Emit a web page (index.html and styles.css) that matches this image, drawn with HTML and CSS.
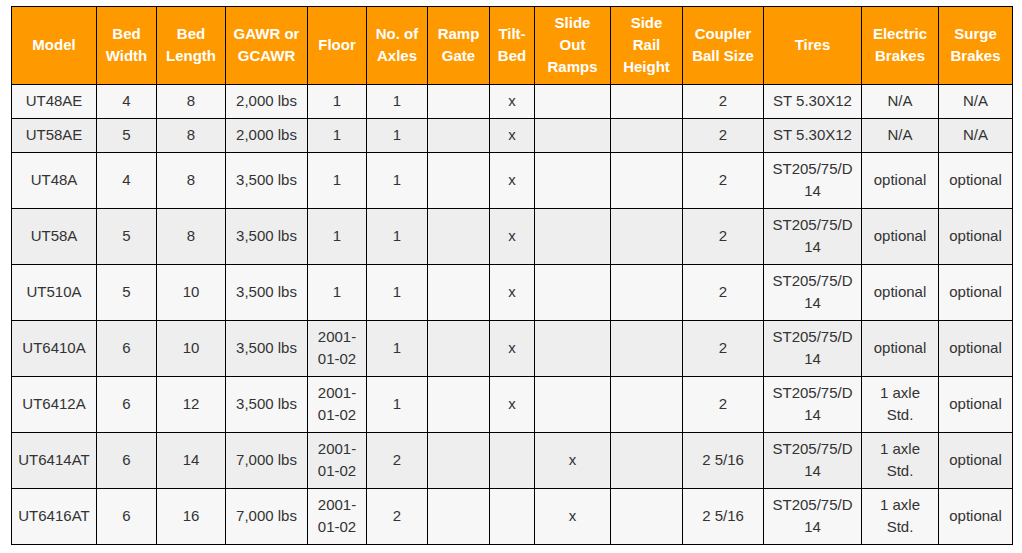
FILE: index.html
```html
<!DOCTYPE html>
<html>
<head>
<meta charset="utf-8">
<link rel="stylesheet" href="styles.css">
</head>
<body>
<div class="wrap">
<table class="spec">
<colgroup>
<col style="width:85px"><col style="width:60px"><col style="width:69px"><col style="width:82px"><col style="width:59px"><col style="width:61px"><col style="width:62px"><col style="width:45px"><col style="width:76px"><col style="width:72px"><col style="width:81px"><col style="width:98px"><col style="width:77px"><col style="width:74px">
</colgroup>
<thead>
<tr><th>Model</th><th>Bed Width</th><th>Bed Length</th><th>GAWR or GCAWR</th><th>Floor</th><th>No. of Axles</th><th>Ramp Gate</th><th>Tilt-Bed</th><th>Slide Out Ramps</th><th>Side Rail Height</th><th>Coupler Ball Size</th><th>Tires</th><th>Electric Brakes</th><th>Surge Brakes</th></tr>
</thead>
<tbody>
<tr><td>UT48AE</td><td>4</td><td>8</td><td>2,000 lbs</td><td>1</td><td>1</td><td></td><td>x</td><td></td><td></td><td>2</td><td>ST 5.30X12</td><td>N/A</td><td>N/A</td></tr>
<tr><td>UT58AE</td><td>5</td><td>8</td><td>2,000 lbs</td><td>1</td><td>1</td><td></td><td>x</td><td></td><td></td><td>2</td><td>ST 5.30X12</td><td>N/A</td><td>N/A</td></tr>
<tr><td>UT48A</td><td>4</td><td>8</td><td>3,500 lbs</td><td>1</td><td>1</td><td></td><td>x</td><td></td><td></td><td>2</td><td>ST205/75/D 14</td><td>optional</td><td>optional</td></tr>
<tr><td>UT58A</td><td>5</td><td>8</td><td>3,500 lbs</td><td>1</td><td>1</td><td></td><td>x</td><td></td><td></td><td>2</td><td>ST205/75/D 14</td><td>optional</td><td>optional</td></tr>
<tr><td>UT510A</td><td>5</td><td>10</td><td>3,500 lbs</td><td>1</td><td>1</td><td></td><td>x</td><td></td><td></td><td>2</td><td>ST205/75/D 14</td><td>optional</td><td>optional</td></tr>
<tr><td>UT6410A</td><td>6</td><td>10</td><td>3,500 lbs</td><td>2001-01-02</td><td>1</td><td></td><td>x</td><td></td><td></td><td>2</td><td>ST205/75/D 14</td><td>optional</td><td>optional</td></tr>
<tr><td>UT6412A</td><td>6</td><td>12</td><td>3,500 lbs</td><td>2001-01-02</td><td>1</td><td></td><td>x</td><td></td><td></td><td>2</td><td>ST205/75/D 14</td><td>1 axle Std.</td><td>optional</td></tr>
<tr><td>UT6414AT</td><td>6</td><td>14</td><td>7,000 lbs</td><td>2001-01-02</td><td>2</td><td></td><td></td><td>x</td><td></td><td>2 5/16</td><td>ST205/75/D 14</td><td>1 axle Std.</td><td>optional</td></tr>
<tr><td>UT6416AT</td><td>6</td><td>16</td><td>7,000 lbs</td><td>2001-01-02</td><td>2</td><td></td><td></td><td>x</td><td></td><td>2 5/16</td><td>ST205/75/D 14</td><td>1 axle Std.</td><td>optional</td></tr>
</tbody>
</table>
</div>
</body>
</html>
```
FILE: styles.css
```css
html, body {
  margin: 0;
  padding: 0;
  background: #ffffff;
}
.wrap {
  padding: 6px 0 0 11px;
}
.spec {
  border-collapse: collapse;
  table-layout: fixed;
  width: 1001px;
  font-family: "Liberation Sans", Arial, sans-serif;
  font-size: 15px;
  line-height: 22px;
  color: #333333;
}
.spec th,
.spec td {
  border: 1px solid #000000;
  padding: 5px 6px 6px;
  text-align: center;
  vertical-align: middle;
}
.spec th {
  background: #ff9900;
  color: #ffffff;
  font-weight: bold;
}
.spec tbody tr:nth-child(odd) td {
  background: #f7f7f7;
}
.spec tbody tr:nth-child(even) td {
  background: #eeeeee;
}
```
